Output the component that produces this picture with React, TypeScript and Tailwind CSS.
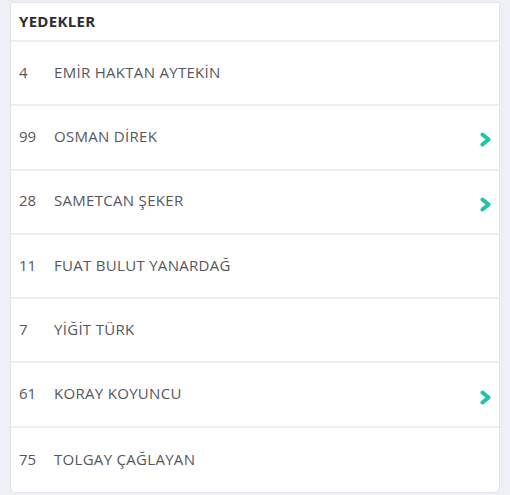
const players = [
  { no: "4", name: "EMİR HAKTAN AYTEKİN", link: false },
  { no: "99", name: "OSMAN DİREK", link: true },
  { no: "28", name: "SAMETCAN ŞEKER", link: true },
  { no: "11", name: "FUAT BULUT YANARDAĞ", link: false },
  { no: "7", name: "YİĞİT TÜRK", link: false },
  { no: "61", name: "KORAY KOYUNCU", link: true },
  { no: "75", name: "TOLGAY ÇAĞLAYAN", link: false },
];

function Chevron() {
  return (
    <svg width="13" height="15" viewBox="0 0 13 15" className="shrink-0">
      <polyline
        points="3.5,2.5 9.5,7.5 3.5,12.5"
        fill="none"
        stroke="#1fc3a7"
        strokeWidth="4"
        strokeLinecap="round"
        strokeLinejoin="round"
      />
    </svg>
  );
}

export default function App() {
  return (
    <div className="w-[510px] h-[495px] bg-[#eef0f5] px-[10px] pt-[2px] font-['Open_Sans',sans-serif]">
      <div className="bg-white border border-[#e3e5ea] rounded-b-md overflow-hidden">
        {/* Header */}
        <div className="h-[39px] flex items-center px-2 border-b-2 border-[#eceef1]">
          <span className="text-[15px] font-bold text-[#2b2d33] tracking-[0.3px]">YEDEKLER</span>
        </div>

        {/* Rows */}
        {players.map((p, i) => (
          <div
            key={p.no}
            className={
              "h-[64.3px] flex items-center px-2 text-[15px] text-[#55575c] " +
              (i < players.length - 1 ? "border-b-2 border-[#eceef1]" : "")
            }
          >
            <span className="w-[35px] shrink-0 -mt-[2px]">{p.no}</span>
            <span className="flex-1 tracking-[0.3px] -mt-[2px]">{p.name}</span>
            {p.link && (
              <span className="mt-[5px] -mr-[1px]">
                <Chevron />
              </span>
            )}
          </div>
        ))}
      </div>
    </div>
  );
}
